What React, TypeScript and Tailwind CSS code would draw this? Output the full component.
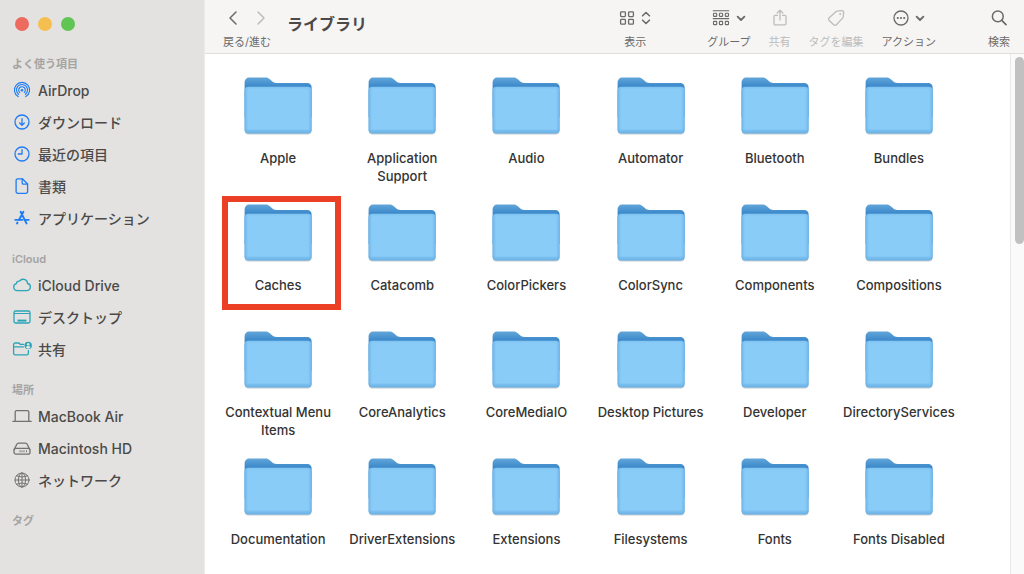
import { useId } from 'react'
import type { ReactNode } from 'react'
import clsx from 'clsx'

interface Place {
  label: string
  icon: ReactNode
}

interface Section {
  title: string
  tint: string
  places: Place[]
}

const FOLDERS = [
  'Apple',
  'Application Support',
  'Audio',
  'Automator',
  'Bluetooth',
  'Bundles',
  'Caches',
  'Catacomb',
  'ColorPickers',
  'ColorSync',
  'Components',
  'Compositions',
  'Contextual Menu Items',
  'CoreAnalytics',
  'CoreMediaIO',
  'Desktop Pictures',
  'Developer',
  'DirectoryServices',
  'Documentation',
  'DriverExtensions',
  'Extensions',
  'Filesystems',
  'Fonts',
  'Fonts Disabled',
]

const MARKED = 'Caches'

function Glyph({ w = 20, h = 18, children }: { w?: number; h?: number; children: ReactNode }) {
  return (
    <svg
      width={w}
      height={h}
      viewBox={`0 0 ${w} ${h}`}
      fill="none"
      stroke="currentColor"
      strokeWidth="1.3"
      strokeLinecap="round"
      strokeLinejoin="round"
      className="shrink-0"
      aria-hidden="true"
    >
      {children}
    </svg>
  )
}

const SECTIONS: Section[] = [
  {
    title: 'よく使う項目',
    tint: 'text-[#1f7cf5]',
    places: [
      {
        label: 'AirDrop',
        icon: (
          <Glyph>
            <g strokeWidth="1.1">
              <path d="M6.2 15.6a7.6 7.6 0 1 1 7.6 0" />
              <path d="M6.6 13.3a5.5 5.5 0 1 1 6.8 0" />
              <path d="M7.8 11.5a3.3 3.3 0 1 1 4.4 0" />
            </g>
            <circle cx="10" cy="9.2" r="1.3" fill="currentColor" stroke="none" />
          </Glyph>
        ),
      },
      {
        label: 'ダウンロード',
        icon: (
          <Glyph>
            <circle cx="10" cy="9" r="7" />
            <path d="M10 5.6v6.6M7.7 10l2.3 2.3 2.3-2.3" />
          </Glyph>
        ),
      },
      {
        label: '最近の項目',
        icon: (
          <Glyph>
            <circle cx="10" cy="9" r="7" />
            <path d="M10 4.6V9H6.2" />
          </Glyph>
        ),
      },
      {
        label: '書類',
        icon: (
          <Glyph>
            <path d="M5.8 1.8h4.6l5.2 5.2v7.6a1.7 1.7 0 0 1-1.7 1.7H5.8a1.7 1.7 0 0 1-1.7-1.7V3.5a1.7 1.7 0 0 1 1.7-1.7z" />
            <path d="M10.2 2v3.9c0 .8.5 1.3 1.3 1.3h3.9" />
          </Glyph>
        ),
      },
      {
        label: 'アプリケーション',
        icon: (
          <Glyph>
            <g strokeWidth="1.9">
              <path d="M8.6 2.8l5.9 11.6M11.4 2.8l-4.3 8M5.5 13.5l-.5 1" />
              <path d="M3.3 10.9h7.2M13.5 10.9h3.2" />
            </g>
          </Glyph>
        ),
      },
    ],
  },
  {
    title: 'iCloud',
    tint: 'text-[#2aa5b8]',
    places: [
      {
        label: 'iCloud Drive',
        icon: (
          <Glyph>
            <path d="M5.2 14.6a3.5 3.5 0 0 1-.8-6.9 2.5 2.5 0 0 1 3.2-2.5 4.4 4.4 0 0 1 8 2.3 3.6 3.6 0 0 1-.5 7.1z" />
          </Glyph>
        ),
      },
      {
        label: 'デスクトップ',
        icon: (
          <Glyph>
            <rect x="2" y="3" width="16" height="12" rx="1.8" />
            <path d="M2.3 5.5h15.4" strokeWidth="1" />
            <path d="M5.5 12.6h9" strokeWidth="2" strokeLinecap="butt" />
          </Glyph>
        ),
      },
      {
        label: '共有',
        icon: (
          <Glyph>
            <path d="M11.6 4.3H8.2L7 3H3a1.4 1.4 0 0 0-1.4 1.4v8.8A1.6 1.6 0 0 0 3.2 14.8h11.6a1.6 1.6 0 0 0 1.6-1.6v-2.8" />
            <path d="M1.8 6.9h9.6" />
            <circle cx="16.2" cy="5.4" r="3.7" fill="currentColor" stroke="none" />
            <circle cx="16.2" cy="4.3" r="1.3" fill="#e3e2e0" stroke="none" />
            <path d="M14 7.5a2.2 1.8 0 0 1 4.4 0 3 3 0 0 1-4.4 0z" fill="#e3e2e0" stroke="none" />
          </Glyph>
        ),
      },
    ],
  },
  {
    title: '場所',
    tint: 'text-[#737272]',
    places: [
      {
        label: 'MacBook Air',
        icon: (
          <Glyph>
            <path d="M3.2 14V5a1.4 1.4 0 0 1 1.4-1.4h10.8A1.4 1.4 0 0 1 16.8 5v9" />
            <path d="M.8 14.3h18.4" />
          </Glyph>
        ),
      },
      {
        label: 'Macintosh HD',
        icon: (
          <Glyph>
            <path d="M2.2 10.6l2.6-5.3a1.9 1.9 0 0 1 1.7-1.1h7a1.9 1.9 0 0 1 1.7 1.1l2.6 5.3" />
            <rect x="2" y="9.3" width="16" height="5.9" rx="2" />
            <path d="M8 11.6v1.3M10 11.6v1.3M12 11.6v1.3M14.5 11.6v1.3" strokeWidth="0.9" />
          </Glyph>
        ),
      },
      {
        label: 'ネットワーク',
        icon: (
          <Glyph>
            <g strokeWidth="1">
              <circle cx="10" cy="9" r="7" />
              <ellipse cx="10" cy="9" rx="3.6" ry="7" />
              <path d="M10 2v14M3 9h14M4.6 4.7c3.2 1.7 7.6 1.7 10.8 0M4.6 13.3c3.2-1.7 7.6-1.7 10.8 0" />
            </g>
          </Glyph>
        ),
      },
    ],
  },
  { title: 'タグ', tint: '', places: [] },
]

function Sidebar() {
  return (
    <aside className="w-[205px] shrink-0 overflow-hidden border-r border-[#ececea] bg-[#e3e2e0]">
      <div className="flex h-[54px] items-center gap-[9px] px-[15px] pb-[6px]">
        <button aria-label="閉じる" className="size-[14px] rounded-full bg-[#ed6a5f]" />
        <button aria-label="しまう" className="size-[14px] rounded-full bg-[#f5bf4f]" />
        <button aria-label="拡大" className="size-[14px] rounded-full bg-[#61c554]" />
      </div>
      <nav className="flex flex-col gap-[15px]">
        {SECTIONS.map((section) => (
          <section key={section.title}>
            <h2 className="h-5 pl-3 text-[11px] leading-5 font-semibold text-[#a5a4a2]">{section.title}</h2>
            {section.places.map((place) => (
              <a
                key={place.label}
                href="#"
                className="flex h-8 items-center gap-[6px] pl-3 text-[14px] font-medium text-[#4b4a49]"
              >
                <span className={section.tint}>{place.icon}</span>
                {place.label}
              </a>
            ))}
          </section>
        ))}
      </nav>
    </aside>
  )
}

interface ToolProps {
  label: string
  disabled?: boolean
  children: ReactNode
}

function Tool({ label, disabled, children }: ToolProps) {
  return (
    <button
      disabled={disabled}
      className={clsx('flex flex-col items-center gap-[6px]', disabled ? 'text-[#bdbcba]' : 'text-[#6b6a69]')}
    >
      <span className="flex h-5 items-center gap-[6px]">{children}</span>
      <span className="text-[11px] leading-4 whitespace-nowrap">{label}</span>
    </button>
  )
}

function ChevronDown() {
  return (
    <Glyph w={10} h={18}>
      <path d="M1.6 7.6L5 11l3.4-3.4" strokeWidth="1.8" />
    </Glyph>
  )
}

function Toolbar() {
  return (
    <header className="flex h-[54px] shrink-0 items-start border-b border-[#e0dfde] bg-[#f6f5f4] pt-2 pr-[14px] pl-[18px]">
      <div className="flex flex-col items-center gap-[6px]">
        <div className="flex h-5 items-center gap-[18px]">
          <button aria-label="戻る" className="text-[#6b6a69]">
            <Glyph w={10}>
              <path d="M8 3L2 9l6 6" strokeWidth="1.5" />
            </Glyph>
          </button>
          <button aria-label="進む" disabled className="text-[#bdbcba]">
            <Glyph w={10}>
              <path d="M2 3l6 6-6 6" strokeWidth="1.5" />
            </Glyph>
          </button>
        </div>
        <span className="text-[11px] leading-4 text-[#6b6a69]">戻る/進む</span>
      </div>
      <h1 className="ml-4 text-[16px] leading-8 font-bold text-[#4b4a49]">ライブラリ</h1>

      <div className="ml-auto flex items-start gap-14">
        <Tool label="表示">
          <Glyph w={16}>
            <rect x="1.6" y="2.8" width="4.8" height="4.8" rx="0.8" />
            <rect x="9.6" y="2.8" width="4.8" height="4.8" rx="0.8" />
            <rect x="1.6" y="10.4" width="4.8" height="4.8" rx="0.8" />
            <rect x="9.6" y="10.4" width="4.8" height="4.8" rx="0.8" />
          </Glyph>
          <Glyph w={10}>
            <path d="M1.6 6.8L5 3.5l3.4 3.3M1.6 11.2L5 14.5l3.4-3.3" strokeWidth="1.6" />
          </Glyph>
        </Tool>
        <div className="flex items-start gap-[18px]">
          <Tool label="グループ">
            <Glyph w={18}>
              <g strokeWidth="1.1">
                <path d="M1.2 1.8h15.6M1.2 9.6h15.6" />
                <rect x="1.5" y="4.2" width="3.2" height="3.2" rx="0.7" />
                <rect x="7.4" y="4.2" width="3.2" height="3.2" rx="0.7" />
                <rect x="13.3" y="4.2" width="3.2" height="3.2" rx="0.7" />
                <rect x="1.5" y="12.4" width="3.2" height="3.2" rx="0.7" />
                <rect x="7.4" y="12.4" width="3.2" height="3.2" rx="0.7" />
                <rect x="13.3" y="12.4" width="3.2" height="3.2" rx="0.7" />
              </g>
            </Glyph>
            <ChevronDown />
          </Tool>
          <Tool label="共有" disabled>
            <Glyph w={16}>
              <path d="M5.4 6.4H3.2a1.2 1.2 0 0 0-1.2 1.2v7a1.2 1.2 0 0 0 1.2 1.2h9.6a1.2 1.2 0 0 0 1.2-1.2v-7a1.2 1.2 0 0 0-1.2-1.2h-2.2" />
              <path d="M8 11V1.4M5.2 4L8 1.2 10.8 4" />
            </Glyph>
          </Tool>
          <Tool label="タグを編集" disabled>
            <Glyph w={18}>
              <path d="M10.3 2.1l4.3-.5a1.8 1.8 0 0 1 2 1.9l-.4 4.4a2 2 0 0 1-.6 1.2l-6.2 6.6a1.9 1.9 0 0 1-2.7.1l-4.5-4.3a1.9 1.9 0 0 1 0-2.7l6.7-6.1a2.6 2.6 0 0 1 1.4-.6z" />
              <circle cx="13.2" cy="5" r="1" fill="currentColor" stroke="none" />
            </Glyph>
          </Tool>
          <Tool label="アクション">
            <Glyph w={16}>
              <circle cx="8" cy="9" r="7" />
              <g fill="currentColor" stroke="none">
                <circle cx="4.8" cy="9" r="1.1" />
                <circle cx="8" cy="9" r="1.1" />
                <circle cx="11.2" cy="9" r="1.1" />
              </g>
            </Glyph>
            <ChevronDown />
          </Tool>
        </div>
        {/* search sits a little closer to the action menu */}
        <div className="-ml-1">
          <Tool label="検索">
            <Glyph w={16}>
              <circle cx="6.8" cy="7.4" r="5.4" strokeWidth="1.5" />
              <path d="M10.8 11.4l4.2 4.2" strokeWidth="1.7" />
            </Glyph>
          </Tool>
        </div>
      </div>
    </header>
  )
}

function FolderIcon() {
  const id = useId()
  return (
    <svg width="68" height="58" viewBox="0 0 68 58" aria-hidden="true">
      <defs>
        <linearGradient id={`${id}back`} x1="0" y1="0" x2="0" y2="1">
          <stop offset="0" stopColor="#62a6d9" />
          <stop offset="0.2" stopColor="#3f8bcb" />
          <stop offset="1" stopColor="#3f8bcb" />
        </linearGradient>
        <linearGradient id={`${id}front`} x1="0" y1="0" x2="0" y2="1">
          <stop offset="0" stopColor="#7fc3f1" />
          <stop offset="0.06" stopColor="#8accf8" />
          <stop offset="0.9" stopColor="#8accf8" />
          <stop offset="0.93" stopColor="#7abff0" />
          <stop offset="1" stopColor="#67afe2" />
        </linearGradient>
        <linearGradient id={`${id}sides`}>
          <stop offset="0" stopColor="#5fa9de" stopOpacity="0.75" />
          <stop offset="0.06" stopColor="#7abff0" stopOpacity="0" />
          <stop offset="0.94" stopColor="#7abff0" stopOpacity="0" />
          <stop offset="1" stopColor="#5fa9de" stopOpacity="0.75" />
        </linearGradient>
      </defs>
      <rect x="0.7" y="12" width="66.8" height="45.4" rx="4" fill="#7d8c98" opacity="0.45" />
      <path
        d="M0.6 5a4.4 4.4 0 0 1 4.4-4.4h16.5c1.8 0 3 .5 4.3 1.6l2.6 2.3c1.1 1 2.2 1.4 3.8 1.4h31.2a4.2 4.2 0 0 1 4.2 4.2V40H.6z"
        fill={`url(#${id}back)`}
      />
      <rect x="0.6" y="9.8" width="67" height="46.8" rx="4" fill={`url(#${id}front)`} />
      <rect x="0.6" y="9.8" width="67" height="46.8" rx="4" fill={`url(#${id}sides)`} />
    </svg>
  )
}

function Folder({ name, marked }: { name: string; marked: boolean }) {
  return (
    <li className="relative h-[127px] pt-2">
      <button className="flex w-full flex-col items-center gap-[14px]">
        <FolderIcon />
        <span className="max-w-[116px] text-[13px] leading-[18px] font-medium text-[#333333]">{name}</span>
      </button>
      {marked && (
        <span className="pointer-events-none absolute top-0 -right-px left-[6px] h-[114px] border-[6px] border-[#eb3f26]" />
      )}
    </li>
  )
}

export default function App() {
  return (
    <div className="flex h-screen overflow-hidden bg-white font-['Inter','Noto_Sans_CJK_JP',sans-serif]" lang="ja">
      <Sidebar />
      <main className="flex min-w-0 flex-1 flex-col">
        <Toolbar />
        <div className="flex min-h-0 flex-1">
          <ul className="grid flex-1 grid-cols-6 content-start overflow-hidden pt-[15px] pr-[49px] pl-[11px]">
            {FOLDERS.map((name) => (
              <Folder key={name} name={name} marked={name === MARKED} />
            ))}
          </ul>
          <div className="w-[14px] shrink-0 border-l border-[#e8e8e8] bg-[#fafafa] pt-[3px] pl-1">
            <div className="h-[187px] w-[9px] rounded-full bg-[#c1c1c1]" />
          </div>
        </div>
      </main>
    </div>
  )
}
